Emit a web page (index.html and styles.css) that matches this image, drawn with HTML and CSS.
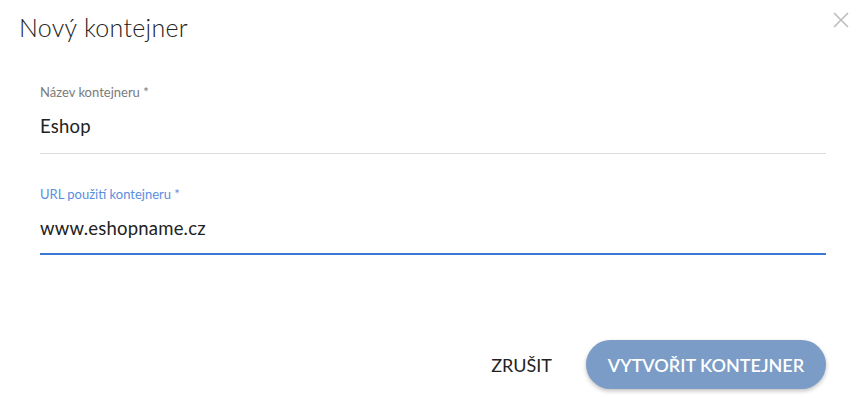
FILE: index.html
```html
<!DOCTYPE html>
<html lang="cs">
<head>
  <meta charset="UTF-8">
  <title>Nový kontejner</title>
  <link rel="stylesheet" href="styles.css">
</head>
<body>
  <div class="dialog">
    <div class="dialog-header">
      <h2>Nový kontejner</h2>
      <button class="close-btn" aria-label="Zavřít">
        <svg width="16" height="16" viewBox="0 0 16 16">
          <path d="M1 1 L15 15 M15 1 L1 15" stroke="#bdbdbd" stroke-width="1.6" fill="none"/>
        </svg>
      </button>
    </div>

    <div class="dialog-content">
      <div class="field">
        <label>Název kontejneru *</label>
        <div class="field-input">Eshop</div>
      </div>
      <div class="field focused">
        <label>URL použití kontejneru *</label>
        <div class="field-input">www.eshopname.cz</div>
      </div>
    </div>

    <div class="dialog-actions">
      <button class="btn-text">ZRUŠIT</button>
      <button class="btn-primary">VYTVOŘIT KONTEJNER</button>
    </div>
  </div>
</body>
</html>
```

FILE: styles.css
```css
* {
  margin: 0;
  padding: 0;
  box-sizing: border-box;
}

body {
  width: 864px;
  height: 405px;
  font-family: 'Lato', 'Open Sans', sans-serif;
  background: #ffffff;
  color: #222222;
  overflow: hidden;
}

.dialog {
  display: flex;
  flex-direction: column;
  height: 405px;
}

.dialog-header {
  display: flex;
  justify-content: space-between;
  align-items: flex-start;
  padding: 10px 15px 0 19px;
}

.dialog-header h2 {
  font-size: 25px;
  font-weight: 300;
  letter-spacing: 0.3px;
  color: #222222;
  line-height: 34px;
}

.close-btn {
  background: none;
  border: none;
  width: 16px;
  height: 16px;
  margin-top: 2px;
  cursor: pointer;
}

.dialog-content {
  padding: 40px 38px 0 40px;
  display: flex;
  flex-direction: column;
  gap: 32px;
}

.field label {
  display: block;
  font-size: 13px;
  color: #7a7a7a;
  line-height: 16px;
}

.field-input {
  font-size: 18.5px;
  letter-spacing: 0.2px;
  line-height: 24px;
  padding: 14px 0 15px;
  border-bottom: 1px solid #dcdcdc;
  color: #222222;
}

.field.focused label {
  color: #5b8ee0;
}

.field.focused .field-input {
  border-bottom: 2px solid #3a78d4;
  padding-bottom: 13px;
}

.dialog-actions {
  margin-top: auto;
  display: flex;
  justify-content: flex-end;
  align-items: center;
  gap: 34px;
  padding: 0 38px 16px 0;
}

.btn-text {
  background: none;
  border: none;
  font-family: inherit;
  font-size: 18px;
  color: #222222;
  cursor: pointer;
}

.btn-primary {
  background: #7a9cc6;
  color: #ffffff;
  border: none;
  border-radius: 25px;
  height: 49px;
  width: 240px;
  font-family: inherit;
  font-size: 18px;
  font-weight: 600;
  box-shadow: 0 2px 4px rgba(0, 0, 0, 0.25);
  cursor: pointer;
}
```
